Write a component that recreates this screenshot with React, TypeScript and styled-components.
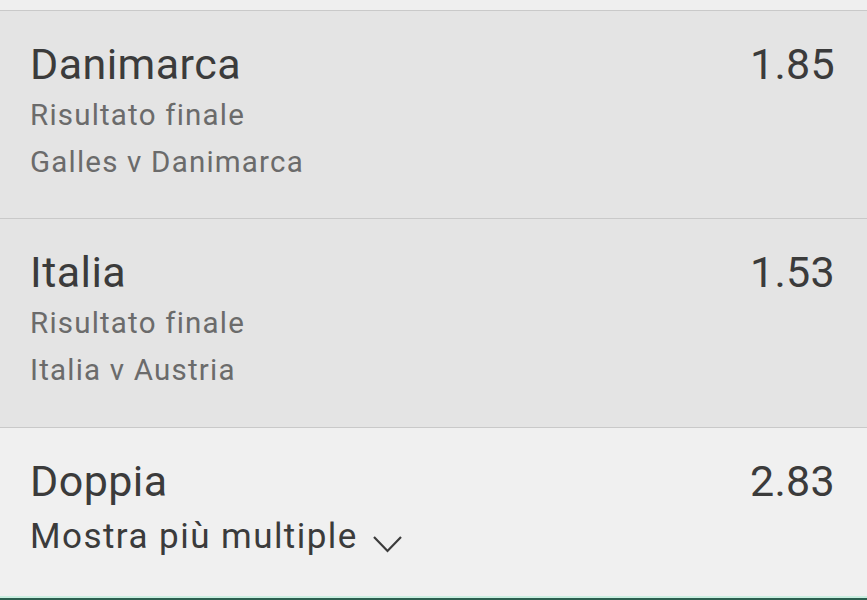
import React from "react";
import styled, { createGlobalStyle } from "styled-components";

const Global = createGlobalStyle`
  html, body { margin: 0; padding: 0; background: #efefef; }
  body { font-family: Roboto, "Noto Sans", "Liberation Sans", sans-serif; }
  * { box-sizing: border-box; }
`;

const Page = styled.div`
  width: 867px;
  height: 600px;
  display: flex;
  flex-direction: column;
  background: #efefef;
  overflow: hidden;
`;

const TopStrip = styled.div`
  height: 11px;
  background: #efefef;
  border-bottom: 1px solid #c9c9c9;
  flex: none;
`;

const Leg = styled.div<{ $bg: string; $pb: number }>`
  display: flex;
  justify-content: space-between;
  align-items: flex-start;
  padding: 29px 32px ${(p) => p.$pb}px 30px;
  background: ${(p) => p.$bg};
  border-bottom: 1px solid #c9c9c9;
  flex: none;
`;

const Info = styled.div`
  display: flex;
  flex-direction: column;
`;

const Title = styled.div`
  font-size: 43px;
  line-height: 48px;
  letter-spacing: 0.45px;
  color: #3b3b3b;
  margin-bottom: 4px;
`;

const Sub = styled.div`
  font-size: 29.5px;
  line-height: 47px;
  letter-spacing: 1.2px;
  color: #6b6b6b;
`;

const Odds = styled.div`
  font-size: 43px;
  line-height: 48px;
  letter-spacing: 0.3px;
  color: #3b3b3b;
`;

const Footer = styled.div`
  flex: 1;
  display: flex;
  justify-content: space-between;
  align-items: flex-start;
  padding: 29px 32px 0 30px;
  background: #f0f0f0;
`;

const More = styled.div`
  display: flex;
  align-items: center;
  gap: 14px;
  margin-top: 6px;
  font-size: 35px;
  line-height: 44px;
  letter-spacing: 1.45px;
  color: #3b3b3b;
`;

const Chevron = styled.svg`
  width: 31px;
  height: 19px;
  margin-top: 14px;
`;

const BottomBar = styled.div`
  height: 4px;
  flex: none;
  border-top: 2px solid #c9eee0;
  background: #2c5f4f;
`;

const legs = [
  { name: "Danimarca", market: "Risultato finale", event: "Galles v Danimarca", odds: "1.85", pb: 32 },
  { name: "Italia", market: "Risultato finale", event: "Italia v Austria", odds: "1.53", pb: 33 },
];

export default function App() {
  return (
    <Page>
      <Global />
      <TopStrip />
      {legs.map((l) => (
        <Leg key={l.name} $bg="#e4e4e4" $pb={l.pb}>
          <Info>
            <Title>{l.name}</Title>
            <Sub>{l.market}</Sub>
            <Sub>{l.event}</Sub>
          </Info>
          <Odds>{l.odds}</Odds>
        </Leg>
      ))}
      <Footer>
        <Info>
          <Title>Doppia</Title>
          <More>
            Mostra più multiple
            <Chevron viewBox="0 0 31 19" fill="none">
              <path d="M2 2 L15.5 16 L29 2" stroke="#3b3b3b" strokeWidth="2.2" />
            </Chevron>
          </More>
        </Info>
        <Odds>2.83</Odds>
      </Footer>
      <BottomBar />
    </Page>
  );
}
